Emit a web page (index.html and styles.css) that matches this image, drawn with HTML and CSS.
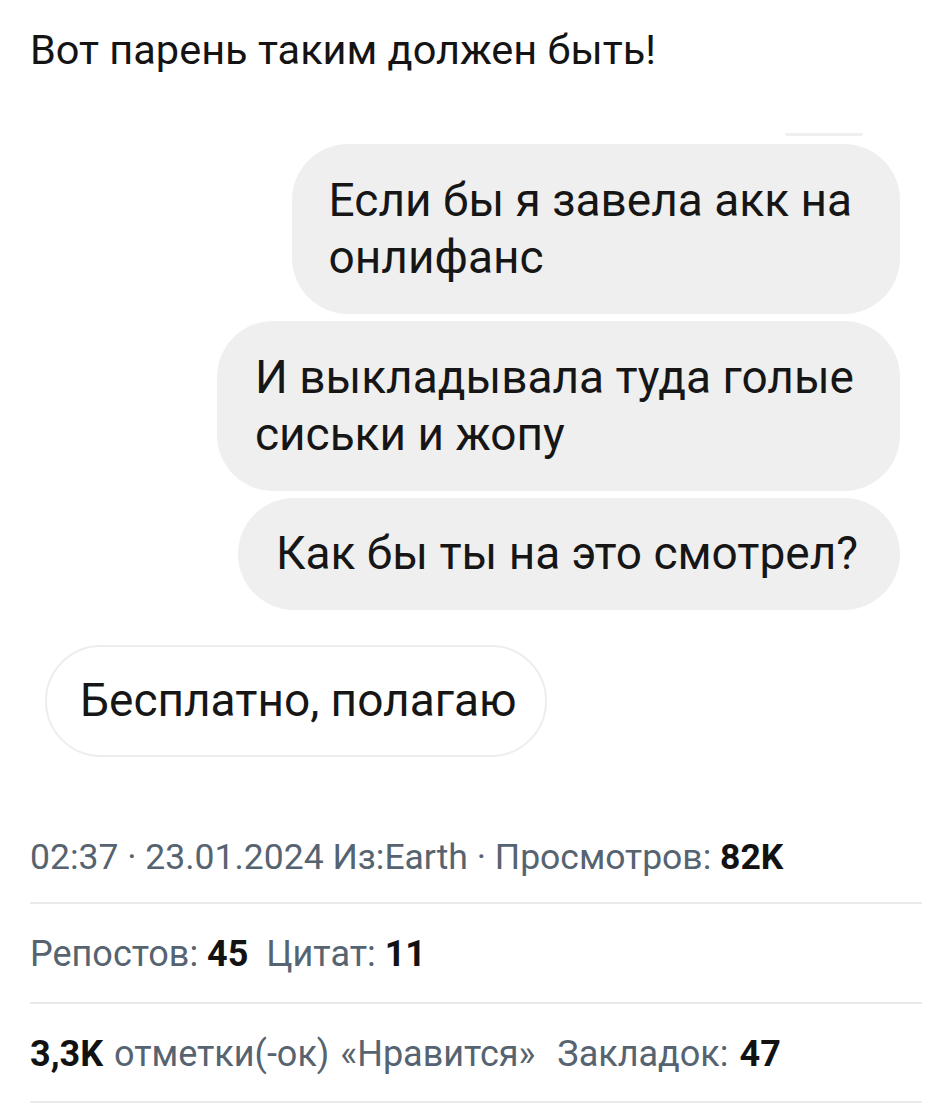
FILE: index.html
```html
<!DOCTYPE html>
<html lang="ru">
<head>
<meta charset="utf-8">
<link rel="stylesheet" href="styles.css">
</head>
<body>
<main class="post">
  <p class="title">Вот парень таким должен быть!</p>
  <section class="shot">
    <div class="prev-edge"></div>
    <div class="bubble out b1">Если бы я завела акк на<br>онлифанс</div>
    <div class="bubble out b2">И выкладывала туда голые<br>сиськи и жопу</div>
    <div class="bubble out b3">Как бы ты на это смотрел?</div>
    <div class="bubble in b4">Бесплатно, полагаю</div>
  </section>
  <div class="meta">02:37 · 23.01.2024 Из:Earth · Просмотров: <b>82K</b></div>
  <div class="row">Репостов: <b>45</b>&nbsp; Цитат: <b>11</b></div>
  <div class="row likes"><b>3,3K</b> отметки(-ок) «Нравится»&nbsp; Закладок: <b>47</b></div>
</main>
</body>
</html>
```
FILE: styles.css
```css
html, body {
  margin: 0;
  padding: 0;
  background: #ffffff;
}
.post {
  padding: 0 30px 0 30px;
  font-family: Roboto, "Noto Sans", sans-serif;
  color: #111;
}
.title {
  margin: 0;
  padding-top: 27px;
  font-size: 41.5px;
  line-height: 46px;
  color: #141414;
}
.shot {
  display: flex;
  flex-direction: column;
  margin-top: 60px;
}
.prev-edge {
  align-self: flex-end;
  width: 78px;
  height: 3px;
  margin-right: 59px;
  background: #efefef;
  border-radius: 0 0 40px 40px;
  margin-bottom: 8px;
}
.bubble {
  font-size: 46px;
  line-height: 57px;
  color: #161616;
  border-radius: 56px;
  white-space: nowrap;
}
.out {
  align-self: flex-end;
  margin-right: 22px;
  background: #efefef;
  margin-bottom: 7px;
}
.b1 { padding: 28px 48px 28px 37px; }
.b2 { padding: 28px 46px 28px 38px; }
.b3 { padding: 27px 42px 28px 38px; }
.in {
  align-self: flex-start;
  margin-left: 15px;
  margin-top: 28px;
  background: #fff;
  border: 2px solid #ededed;
  padding: 25px 28px 26px 33px;
}
.meta {
  margin-top: 77px;
  font-size: 35.5px;
  line-height: 46px;
  color: #566370;
  padding-bottom: 22px;
  border-bottom: 2px solid #e9e9e9;
}
.row {
  font-size: 36px;
  line-height: 46px;
  color: #566370;
  padding: 27px 0 25px;
  border-bottom: 2px solid #e9e9e9;
}
.likes {
  word-spacing: 2px;
  padding-bottom: 24px;
}
.meta b, .row b {
  color: #121212;
  font-weight: 700;
}
```
